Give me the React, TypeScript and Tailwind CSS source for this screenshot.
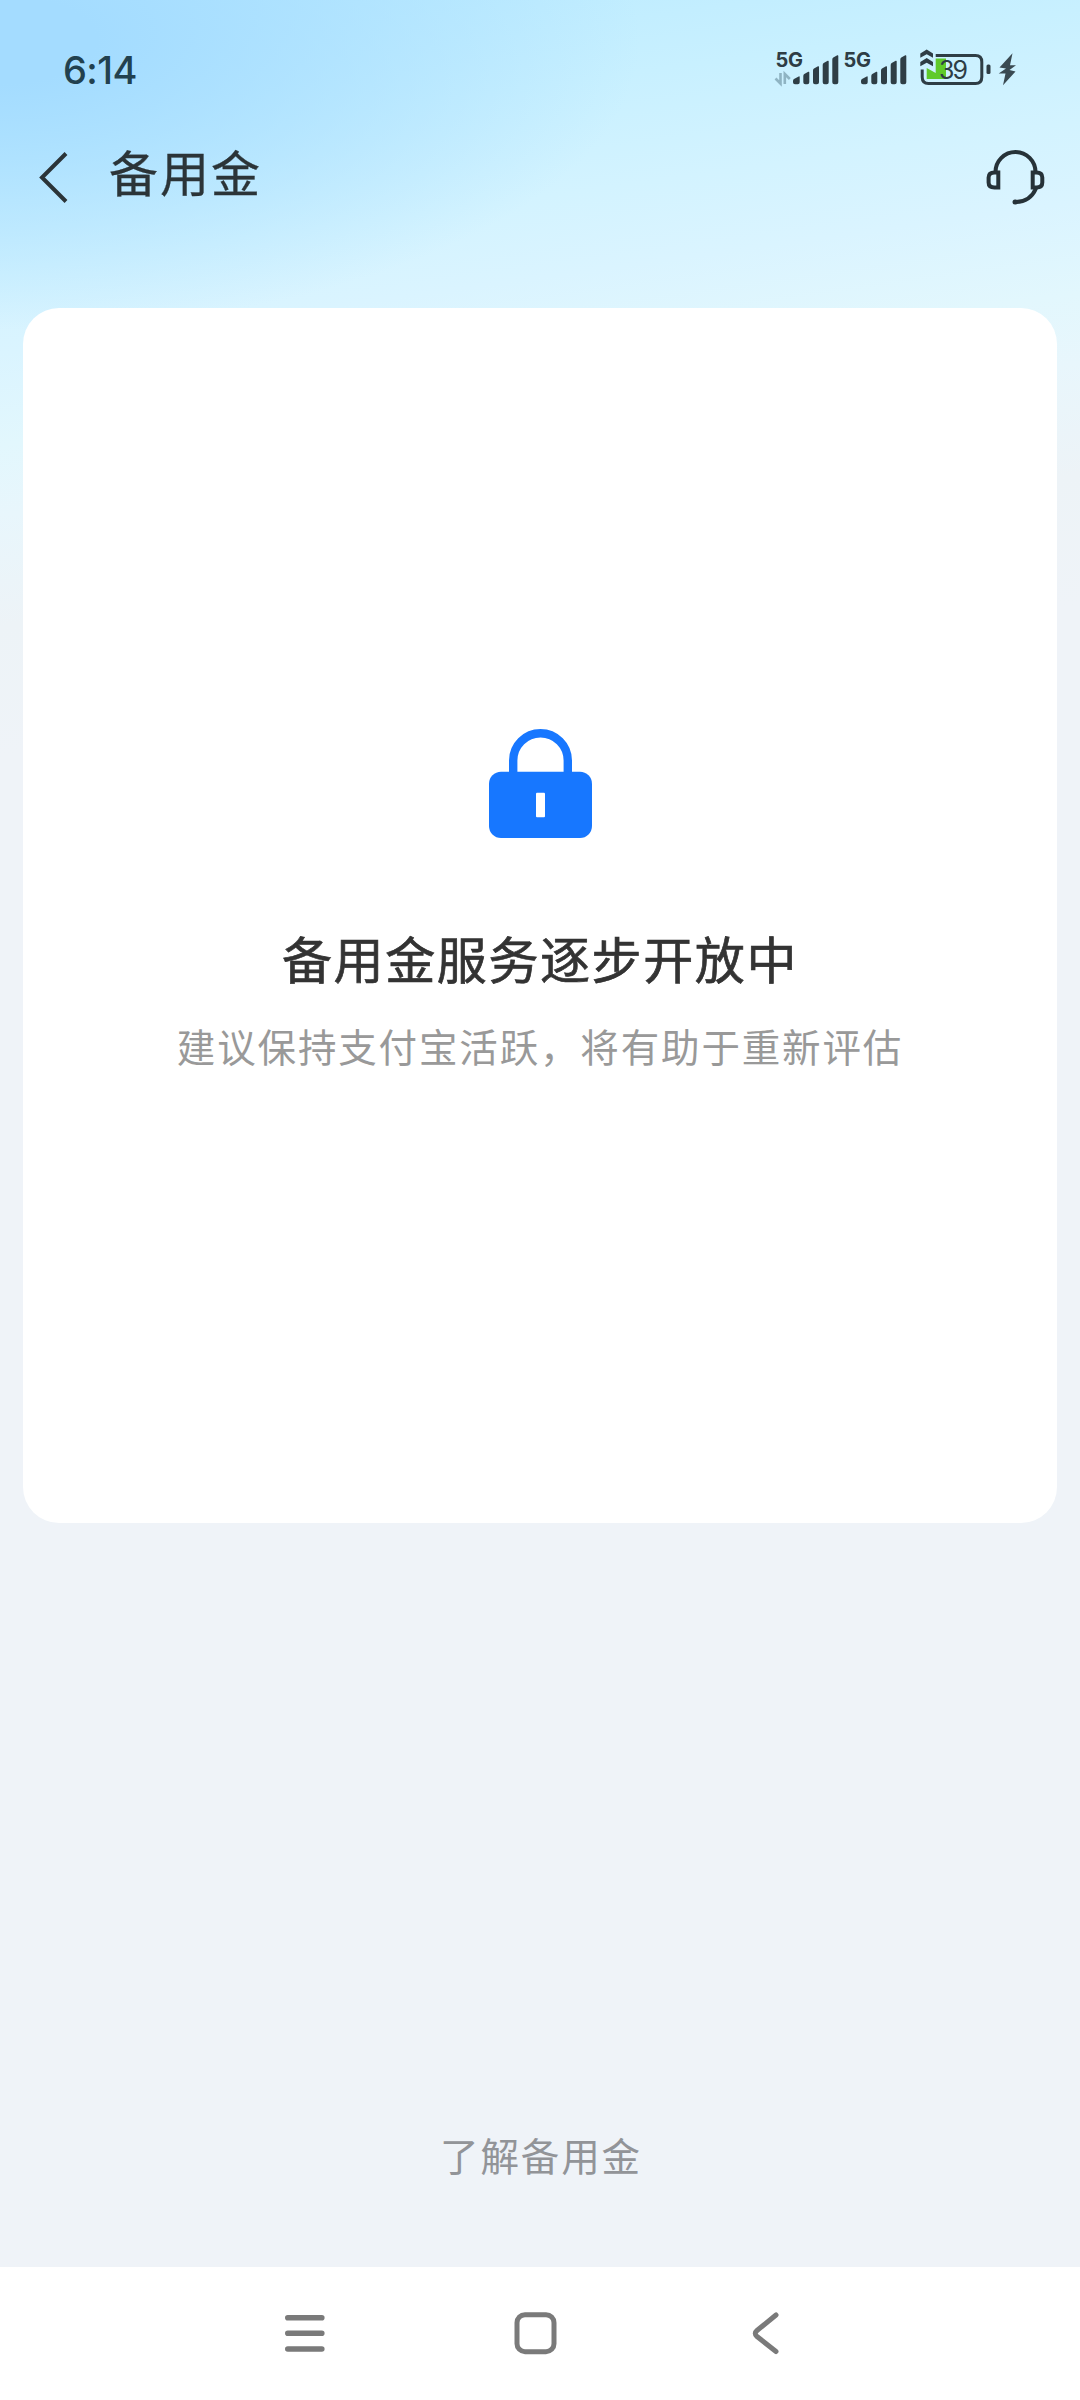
type SignalIconProps = {
  withData?: boolean
  className?: string
}

function SignalIcon({ withData = false, className }: SignalIconProps) {
  return (
    <svg className={className} width="66" height="46" viewBox="0 0 66 46">
      <text x="1.5" y="23" fontSize="20" fontWeight="700" fill="#2e3d45" fontFamily="Inter, sans-serif" textLength="27.5">
        5G
      </text>
      {withData && (
        <g stroke="#8fb4c3" strokeWidth="2.6" fill="none">
          <path d="M6.500 29v10.500l-5-5" />
          <path d="M10.800 40V30l5 5" />
        </g>
      )}
      <g fill="#2e3d45">
        <path d="M19 37q0-1.500 1-2l4.700-2.500q1-.5 1 .8V38.300q0 2-2 2H21q-2 0-2-2z" />
        <path d="M29.300 32q0-1.500 1-2l4-2.200q1-.5 1 .8V38.300q0 2-2 2h-2q-2 0-2-2z" />
        <path d="M39 26.500q0-1.500 1-2l4-2.200q1-.5 1 .8V38.300q0 2-2 2h-2q-2 0-2-2z" />
        <path d="M48.700 21q0-1.500 1-2l4-2.200q1-.5 1 .8V38.300q0 2-2 2h-2q-2 0-2-2z" />
        <path d="M58.300 15.500q0-1.500 1-2l4-2.200q1-.5 1 .8V38.300q0 2-2 2h-2q-2 0-2-2z" />
      </g>
    </svg>
  )
}

function BatteryIcon() {
  return (
    <svg width="100" height="46" viewBox="0 0 100 46">
      <path d="M15.700 14.500H26V35H6.700V24l9 5z" fill="#5fca2a" />
      <path
        d="M15.700 11.500H55.500Q61.800 11.500 61.800 18V33Q61.800 39.500 55.500 39.500H8.500Q2.200 39.500 2.200 33V25.500"
        fill="none"
        stroke="#2e3d45"
        strokeWidth="3"
      />
      {/* fast charge chevrons */}
      <g fill="#2e3d45">
        <path d="M.3 9.500L6.700 5.500l6.300 4v4.300L6.700 10.200.3 13.800z" />
        <path d="M.3 18L6.700 14l6.300 4v4.300l-6.300-3.600L.3 22.300z" />
      </g>
      <text x="19" y="35" fontSize="25" fill="#2e3d45" fontFamily="Inter, sans-serif" textLength="29">
        39
      </text>
      <rect x="66.500" y="20.500" width="4" height="9.500" rx="1.500" fill="#2e3d45" />
      <path d="M92.500 9.300L79.500 23.500l6.500 1-7.300 5h6.800L83 41.300 95.500 27.500l-6-1.500 6.500-4.700h-6z" fill="#3a4a52" />
    </svg>
  )
}

function HeadsetIcon() {
  return (
    <svg width="60" height="60" viewBox="0 0 60 60" fill="none" stroke="#263238" strokeWidth="4">
      <path d="M10.500 24a20 20 0 0 1 40 0" />
      <path d="M13.300 24.500v15H9.500Q3.600 39.500 3.600 34.500V29.500Q3.600 24.500 9.500 24.500z" />
      <path d="M47.700 24.500v15h3.800Q57.300 39.500 57.300 34.500V29.500Q57.300 24.500 51.500 24.500z" />
      <path d="M51 40.500Q45 54 30.500 54" />
      <path d="M30 54h.5" strokeWidth="5" strokeLinecap="round" />
    </svg>
  )
}

function LockIcon() {
  return (
    <svg width="104" height="110" viewBox="0 0 104 110">
      <path d="M25.200 45V31.500a27.300 27.300 0 0 1 54.600 0V45" fill="none" stroke="#1777ff" strokeWidth="8.400" />
      <rect x="1" y="42.700" width="103" height="66.300" rx="12" fill="#1777ff" />
      <rect x="48" y="63.700" width="9" height="24.600" rx="1" fill="#fff" />
    </svg>
  )
}

function StatusBar() {
  return (
    <div className="flex h-[138px] items-start justify-between pr-[60px] pl-[63px]">
      <div className="mt-[43px] font-['Inter',sans-serif] text-[38px] leading-[54px] font-medium tracking-[-0.6px] text-[#22414f]">
        6:14
      </div>
      <div className="mt-[44px] flex">
        <SignalIcon withData />
        <SignalIcon className="mr-[12px] ml-[2px]" />
        <BatteryIcon />
      </div>
    </div>
  )
}

function TitleBar() {
  return (
    <header className="flex h-[170px] items-start justify-between pr-[35px] pl-[38px]">
      <div className="flex items-start">
        <svg className="mt-[14px]" width="32" height="52" viewBox="0 0 32 52" fill="none" stroke="#2b3438" strokeWidth="4">
          <path d="M28 1.500L4 25.500l24 24" />
        </svg>
        <h1 className="mt-[-2px] ml-[39px] text-[49px] leading-[70px] tracking-[2px] text-[#2b3438] [-webkit-text-stroke:0.3px]">
          备用金
        </h1>
      </div>
      <div className="mt-[10px]">
        <HeadsetIcon />
      </div>
    </header>
  )
}

function NavBar() {
  return (
    <nav className="flex h-[133px] bg-white pt-[42px] pl-[282px]">
      <svg width="500" height="48" viewBox="0 0 500 48" fill="none" stroke="#7a7a7a" strokeLinecap="round" strokeLinejoin="round">
        <path d="M5.800 8.700h34M5.800 24.300h34M5.800 40h34" strokeWidth="5.600" />
        <rect x="235" y="5.700" width="37" height="37" rx="8" strokeWidth="5" />
        <path d="M494 6L475 21.500q-3.500 3 0 6L494 42.500" strokeWidth="5" />
      </svg>
    </nav>
  )
}

export default function App() {
  return (
    <div className='flex h-[2400px] w-[1080px] flex-col bg-[#eff3f8] font-["Noto_Sans_CJK_SC",sans-serif]'>
      <div className="flex flex-1 flex-col bg-[radial-gradient(ellipse_640px_290px_at_0px_40px,#a4dcff_15%,#a4dcff00_100%),linear-gradient(172deg,#b9eaff_0px,#c8f0ff_160px,#d3f3ff_270px,#daf4ff_350px,#e2f7fd_440px,#e8f6fc_510px,#edf3f7_620px,#eff3f8_750px)]">
        <StatusBar />
        <TitleBar />
        <main className="mx-[23px] flex h-[1215px] flex-col items-center rounded-[36px] bg-white pt-[421px]">
          <LockIcon />
          <h2 className="mt-[82px] text-[50px] leading-[72px] tracking-[1.6px] text-[#333] [-webkit-text-stroke:0.7px]">
            备用金服务逐步开放中
          </h2>
          <p className="mt-[24px] text-[38.500px] leading-[56px] tracking-[1.850px] text-[#999]">
            建议保持支付宝活跃，将有助于重新评估
          </p>
        </main>
        <footer className="mt-[603px] pl-[2px] text-center text-[38.500px] leading-[56px] tracking-[1.900px] text-[#929498]">
          了解备用金
        </footer>
      </div>
      <NavBar />
    </div>
  )
}
